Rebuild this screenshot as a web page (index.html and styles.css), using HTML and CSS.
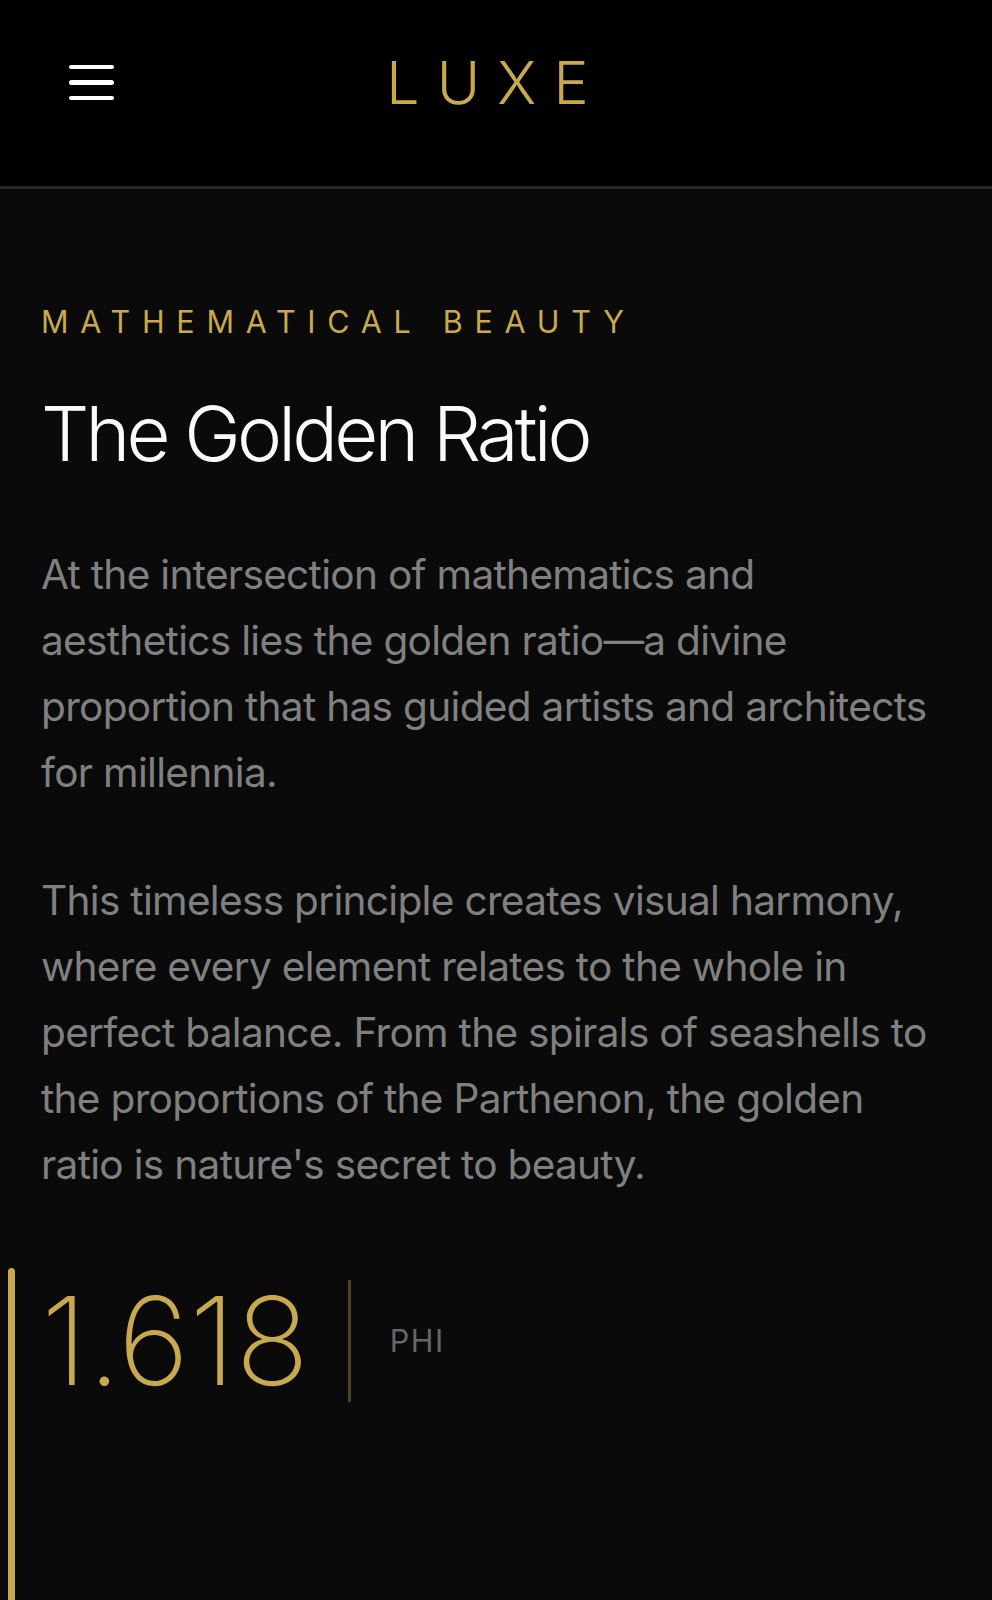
FILE: index.html
```html
<!DOCTYPE html>
<html lang="en">
<head>
<meta charset="utf-8">
<title>LUXE — The Golden Ratio</title>
<link rel="stylesheet" href="styles.css">
</head>
<body>
<header class="site-header">
  <button class="menu-btn" aria-label="Menu">
    <span class="menu-line"></span>
    <span class="menu-line"></span>
    <span class="menu-line"></span>
  </button>
  <div class="logo">LUXE</div>
  <div class="header-spacer"></div>
</header>
<main class="content">
  <p class="eyebrow">Mathematical Beauty</p>
  <h1 class="title">The Golden Ratio</h1>
  <p class="body-text">At the intersection of mathematics and aesthetics lies the golden ratio—a divine proportion that has guided artists and architects for millennia.</p>
  <p class="body-text">This timeless principle creates visual harmony, where every element relates to the whole in perfect balance. From the spirals of seashells to the proportions of the Parthenon, the golden ratio is nature's secret to beauty.</p>
  <section class="metric">
    <div class="metric-bar"></div>
    <div class="metric-body">
      <div class="metric-row">
        <span class="metric-value">1.618</span>
        <span class="metric-divider"></span>
        <span class="metric-label">PHI</span>
      </div>
    </div>
  </section>
</main>
</body>
</html>
```
FILE: styles.css
```css
* { box-sizing: border-box; }
html, body { margin: 0; padding: 0; }
body {
  background: #0a0a0a;
  font-family: "Inter", "Noto Sans", "Liberation Sans", sans-serif;
  color: #808080;
  overflow: hidden;
  height: 1600px;
}
.site-header {
  background: #000;
  height: 189px;
  border-bottom: 3px solid #262626;
  display: grid;
  grid-template-columns: 1fr auto 1fr;
  align-items: center;
  padding-bottom: 21px;
}
.menu-btn {
  background: none;
  border: 0;
  padding: 0;
  margin-left: 69px;
  width: 45px;
  display: flex;
  flex-direction: column;
  gap: 10.8px;
  cursor: pointer;
}
.menu-line {
  display: block;
  width: 45px;
  height: 4.5px;
  border-radius: 3px;
  background: #fff;
}
.logo {
  font-weight: 300;
  font-size: 59px;
  line-height: 1;
  letter-spacing: 0.29em;
  color: #c9a94e;
}
.content {
  padding: 110px 41px 0;
}
.eyebrow {
  margin: 0;
  font-size: 30.5px;
  line-height: 1.5;
  letter-spacing: 0.385em;
  text-transform: uppercase;
  color: #c9a94e;
  font-weight: 400;
}
.title {
  margin: 43px 0 0;
  font-size: 76px;
  line-height: 1.2;
  font-weight: 300;
  color: #fafafa;
  letter-spacing: -0.05em;
}
.body-text {
  margin: 63px 0 0;
  font-size: 40.6px;
  line-height: 66px;
  letter-spacing: -0.7px;
  color: #808080;
}
.body-text + .body-text { margin-top: 62px; }
.metric {
  margin: 70px 0 0 -33px;
  display: flex;
  min-height: 332px;
}
.metric-bar {
  width: 7px;
  flex: none;
  background: #c9a94e;
  border-radius: 4px 4px 0 0;
}
.metric-body {
  padding: 12px 0 0 26px;
}
.metric-row {
  display: flex;
  align-items: center;
  gap: 39px;
}
.metric-value {
  font-size: 122px;
  line-height: 1;
  font-weight: 200;
  color: #c9a94e;
}
.metric-divider {
  align-self: stretch;
  width: 2.5px;
  background: rgba(201, 169, 78, 0.35);
}
.metric-label {
  font-size: 30.5px;
  letter-spacing: 0.05em;
  color: #666;
}
```
